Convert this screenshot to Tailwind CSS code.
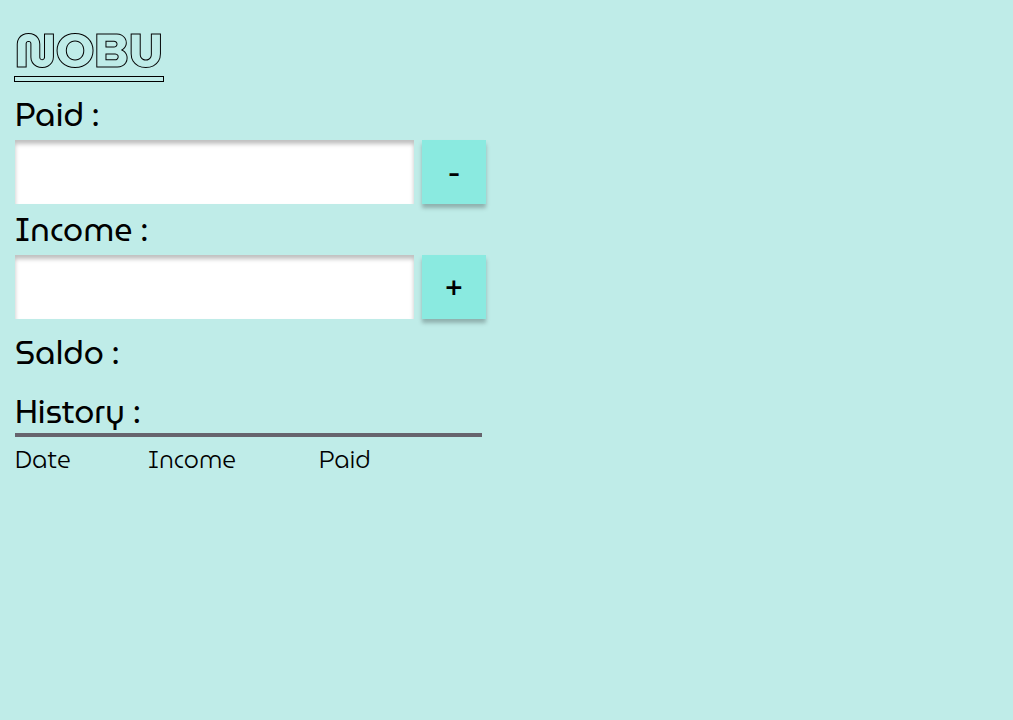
<!DOCTYPE html>
<html lang="en">
<head>
<meta charset="utf-8">
<meta name="viewport" content="width=device-width, initial-scale=1">
<title>NOBU</title>
<script src="https://cdn.jsdelivr.net/npm/@tailwindcss/browser@4"></script>
</head>
<body class="min-h-screen bg-[#bfece8] px-[15px] pt-6 text-black antialiased font-['MuseoModerno','Lato',sans-serif]">
<header class="flex">
  <h1 class="flex flex-col">
    <span class="h-[52px] text-[48px] leading-[52px] font-extrabold text-transparent will-change-transform [-webkit-text-stroke:1px_black]">NOBU</span>
    <span class="-mx-px h-[6px] border border-black"></span>
  </h1>
</header>
<main class="max-w-[471px]">
  <form>
    <label for="paid" class="mt-2 block h-[50px] text-[32px] leading-[50px] font-normal">Paid :</label>
    <div class="flex gap-2">
      <input id="paid" type="text" class="h-16 min-w-0 flex-1 bg-white px-3 text-[32px] shadow-[inset_0_4px_4px_rgba(0,0,0,0.25)] outline-none">
      <button type="button" class="size-16 shrink-0 bg-[#8aeae0] text-[32px] font-normal shadow-[0_4px_4px_rgba(0,0,0,0.25)]">-</button>
    </div>
    <label for="income" class="block h-[51px] text-[32px] leading-[51px] font-normal">Income :</label>
    <div class="flex gap-2">
      <input id="income" type="text" class="h-16 min-w-0 flex-1 bg-white px-3 text-[32px] shadow-[inset_0_4px_4px_rgba(0,0,0,0.25)] outline-none">
      <button type="button" class="size-16 shrink-0 bg-[#8aeae0] pt-[2px] text-[32px] font-normal shadow-[0_4px_4px_rgba(0,0,0,0.25)]">+</button>
    </div>
  </form>
  <p class="mt-2 text-[32px] leading-[51px] font-normal">Saldo :</p>
  <h2 class="mt-2 h-[47px] text-[32px] leading-[51px] font-normal">History :</h2>
  <table class="w-[calc(100%-4px)] table-fixed border-t-4 border-[#66646d] text-left text-[24px] leading-[46px]">
    <thead>
      <tr>
        <th class="w-[133px] font-light">Date</th>
        <th class="w-[171px] font-light">Income</th>
        <th class="font-light">Paid</th>
      </tr>
    </thead>
  </table>
</main>
</body>
</html>
